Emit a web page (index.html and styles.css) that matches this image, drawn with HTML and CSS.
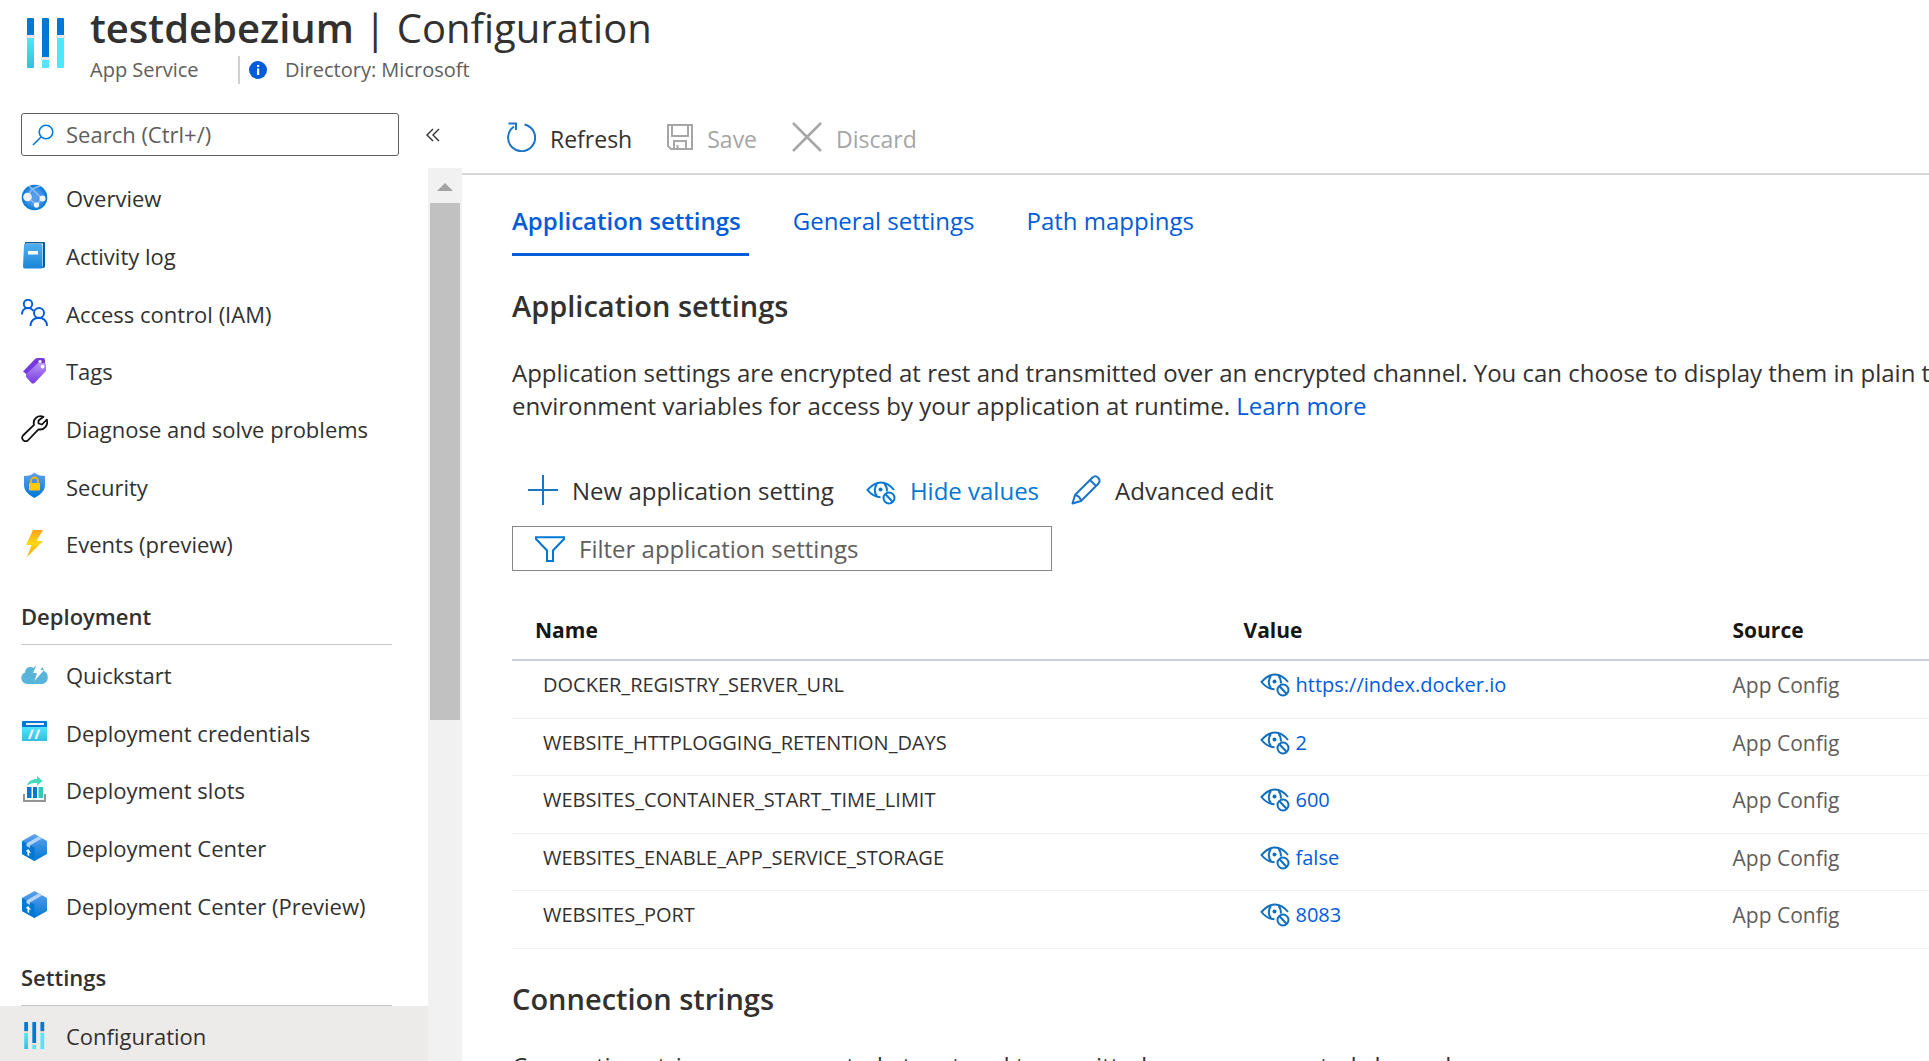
FILE: index.html
```html
<!DOCTYPE html>
<html lang="en">
<head>
<meta charset="utf-8">
<title>testdebezium | Configuration</title>
<link rel="stylesheet" href="styles.css">
</head>
<body>
<svg class="defs" width="0" height="0" aria-hidden="true">
  <defs>
    <linearGradient id="cyan" x1="0" y1="0" x2="0" y2="1"><stop offset="0" stop-color="#50e6ff"/><stop offset="1" stop-color="#32bedd"/></linearGradient>
    <linearGradient id="blue" x1="0" y1="0" x2="0" y2="1"><stop offset="0" stop-color="#5ea0ef"/><stop offset="1" stop-color="#0078d4"/></linearGradient>
    <linearGradient id="book" x1="0" y1="0" x2="0" y2="1"><stop offset="0" stop-color="#4fb0f0"/><stop offset="1" stop-color="#1a86d8"/></linearGradient>
    <linearGradient id="gold" x1="0" y1="0" x2="0" y2="1"><stop offset="0" stop-color="#fea11b"/><stop offset=".5" stop-color="#ffd70f"/><stop offset="1" stop-color="#fea11b"/></linearGradient>
    <linearGradient id="purple" x1="0" y1="0" x2="0" y2="1"><stop offset="0" stop-color="#b796f9"/><stop offset="1" stop-color="#773adc"/></linearGradient>
    <radialGradient id="globe" cx=".5" cy=".5" r=".5"><stop offset="0" stop-color="#5ea0ef"/><stop offset=".6" stop-color="#4494e8"/><stop offset="1" stop-color="#0078d4"/></radialGradient>
  </defs>
  <symbol id="sliders" viewBox="0 0 40 50">
    <path fill="#0078d4" d="M1 1q0-1 1-1h5q1 0 1 1v17H1zM16 1q0-1 1-1h5q1 0 1 1v38h-7zM31 1q0-1 1-1h5q1 0 1 1v17h-7z"/>
    <path fill="url(#cyan)" d="M1 20h7v29q0 1-1 1H2q-1 0-1-1z"/>
    <path fill="#50e6ff" d="M16 42h7v7q0 1-1 1h-5q-1 0-1-1zM31 20h7v29q0 1-1 1h-5q-1 0-1-1z"/>
    <path fill="#e6e6e6" d="M0 17h9v3H0zM15 39h9v3h-9zM30 17h9v3h-9z"/>
  </symbol>
  <symbol id="eye-off" viewBox="0 0 30 24">
    <g fill="none" stroke="currentColor" stroke-width="2">
      <path d="M28 9C24 4 19.500 1.500 15 1.500 9.500 1.500 5 5 1.500 9c3.500 4.500 8 7 13 7.300"/>
      <path d="M11 3C8 6.500 8 11.500 11 15M18.500 3c2 2 2.700 4.500 2.300 7.500"/>
      <circle cx="23" cy="17" r="5.500"/>
      <path d="M19.500 13.200l7 7.600"/>
    </g>
    <circle cx="14.500" cy="8.500" r="2" fill="currentColor"/>
  </symbol>
  <symbol id="package" viewBox="0 0 27 27">
    <path fill="url(#blue)" d="M1 7L13.500 0 26 7v13l-12.500 7L1 20z"/>
    <path fill="#0078d4" d="M1 7l12.500 6.500V27L1 20z"/>
    <path fill="#b5d5f8" d="M5.500 9.500L17.500 2.500l3.500 2L9 11.500V14l-3.500-2z"/>
    <path fill="#fff" d="M7.200 15l2.800 4-1.800-.5v3.500l-1.700-.8v-3.500L4.800 17z"/>
  </symbol>
</svg>

<header class="page-header">
  <svg class="resource-icon" viewBox="0 0 40 50" aria-hidden="true"><use href="#sliders"/></svg>
  <div>
    <h1 class="title"><strong>testdebezium</strong> | Configuration</h1>
    <div class="subtitle">
      <span class="kind">App Service</span>
      <svg class="info" viewBox="0 0 18 18" aria-hidden="true"><circle cx="9" cy="9" r="9" fill="#015cda"/><path fill="#fff" d="M8 7.500h2.200V14H8zM8 4h2.200v2H8z"/></svg>
      <span>Directory: Microsoft</span>
    </div>
  </div>
</header>

<div class="workspace">
  <aside class="sidebar">
    <div class="search-row">
      <label class="search">
        <svg viewBox="0 0 22 22" aria-hidden="true"><circle cx="14" cy="8" r="6.800"/><path d="M9 13l-8 8"/></svg>
        <input type="text" placeholder="Search (Ctrl+/)" aria-label="Search">
      </label>
      <button class="collapse" type="button" aria-label="Collapse menu">
        <svg viewBox="0 0 14 14" aria-hidden="true"><path d="M7 1L1 7l6 6M13 1L7 7l6 6"/></svg>
      </button>
    </div>
    <div class="menu-area">
      <nav class="menu">
        <a class="item" href="#overview">
          <svg viewBox="0 0 27 27" aria-hidden="true"><circle cx="13.500" cy="13.500" r="12.800" fill="url(#globe)"/><path d="M6.500 13L11 5l10 9.500-5.500 6.500zM11 5l8-3M11 5L8 2" fill="none" stroke="#8fbdf5" stroke-width="1.500"/><g fill="#f2f2f2"><circle cx="6.500" cy="13" r="4.300"/><circle cx="21.500" cy="14.500" r="3"/><circle cx="15.500" cy="21" r="2.700"/></g></svg>
          <span>Overview</span></a>
        <a class="item" href="#activity">
          <svg viewBox="0 0 27 27" aria-hidden="true"><path fill="#005ba1" d="M5 0h18q1 0 1 1v23q0 2-2 2H4V1q0-1 1-1z"/><path fill="#fff" d="M5 1.500h17v23H5z"/><path fill="url(#book)" d="M3 3q0-1 1-1h16q1.500 0 1.500 1.500V25q0 1.500-1.500 1.500H4q-2 0-2-2z"/><path fill="#fff" d="M7 9h10v3.500H7z"/></svg>
          <span>Activity log</span></a>
        <a class="item" href="#access">
          <svg viewBox="0 0 27 27" fill="none" stroke="#015cda" stroke-width="1.900" aria-hidden="true"><circle cx="7" cy="5" r="4.200"/><circle cx="18" cy="14" r="5"/><path d="M1 15.500C1 8 9 7 12.500 12M9.500 27c0-11 16.500-11 16.500 0"/></svg>
          <span>Access control (IAM)</span></a>
        <a class="item" href="#tags">
          <svg viewBox="0 0 27 27" aria-hidden="true"><path fill="#773adc" d="M2 14.500L14 2q1-1 3-1h5q2 0 2 2v4L9 20z"/><path fill="url(#purple)" d="M5 17.500L17 6h6q2 0 2 2v6L13.500 26q-1.500 1-3 0L5 20z"/><circle cx="19" cy="4.500" r="1.600" fill="#fff"/><circle cx="21.500" cy="9.500" r="1.900" fill="#fff"/></svg>
          <span>Tags</span></a>
        <a class="item" href="#diagnose">
          <svg viewBox="0 0 27 27" fill="none" stroke="#111" stroke-width="1.800" stroke-linejoin="round" aria-hidden="true"><path d="M22.500 1.800C17-.5 11.500 4 13 9.800L2 20.500a3.500 3.500 0 0 0 4.800 5L17.500 14.300C23.500 15.500 27.500 10 25.800 4.500L21 9.500 17.500 8.500V5.500z"/></svg>
          <span>Diagnose and solve problems</span></a>
        <a class="item" href="#security">
          <svg viewBox="0 0 27 27" aria-hidden="true"><path fill="url(#blue)" d="M3 4q7 0 10.500-3.500Q17 4 24 4v9c0 7-6.500 10.500-10.500 13C9.500 23.500 3 20 3 13z"/><path d="M10 12V9a3.500 3.500 0 0 1 7 0v3" fill="none" stroke="#f5b800" stroke-width="1.800"/><rect x="8" y="11" width="11" height="7.500" rx="1" fill="#ffca0a"/></svg>
          <span>Security</span></a>
        <a class="item" href="#events">
          <svg viewBox="0 0 27 27" aria-hidden="true"><path fill="url(#gold)" d="M12 0h10l-6.500 11H22L6 27l4.500-12H5z"/></svg>
          <span>Events (preview)</span></a>

        <h2 class="group">Deployment</h2>
        <a class="item" href="#quickstart">
          <svg viewBox="0 0 27 27" aria-hidden="true"><path fill="#59b4d9" d="M6 23a6 6 0 0 1-2-11.500C4 7 9 4.500 12.500 7 14 3.500 22 3 23 10c5 1.500 5.500 12-1.500 13z"/><path fill="#fff" d="M16 3h7l-3.500 6H23l-9.500 11 2.500-8h-4z"/></svg>
          <span>Quickstart</span></a>
        <a class="item" href="#credentials">
          <svg viewBox="0 0 27 27" aria-hidden="true"><path fill="url(#cyan)" d="M1 9h25v14H1z"/><path fill="#0078d4" d="M1 4q0-1 1-1h23q1 0 1 1v5H1z"/><path fill="#f2f2f2" d="M5 5h18v2H5zM10.500 11.500h2.500L9.500 21H7zM17 11.500h2.500L16 21h-2.500z"/></svg>
          <span>Deployment credentials</span></a>
        <a class="item" href="#slots">
          <svg viewBox="0 0 27 27" aria-hidden="true"><path fill="#949494" d="M2 18h2v6h19v-6h2v8H2z"/><path fill="#0078d4" d="M6 11h4.500v11H6zM12 11h4v11h-4z"/><path fill="#32c8b4" d="M17.500 11H22v11h-4.500z"/><path fill="#3cdcbe" d="M6 10c1-5 5-7 10-7V0l5.500 5L16 9.500V7c-4 0-7 0-10 3z"/></svg>
          <span>Deployment slots</span></a>
        <a class="item" href="#center">
          <svg viewBox="0 0 27 27" aria-hidden="true"><use href="#package"/></svg>
          <span>Deployment Center</span></a>
        <a class="item" href="#center-preview">
          <svg viewBox="0 0 27 27" aria-hidden="true"><use href="#package"/></svg>
          <span>Deployment Center (Preview)</span></a>

        <h2 class="group">Settings</h2>
        <a class="item selected" href="#configuration" aria-current="page">
          <svg viewBox="0 0 40 50" aria-hidden="true"><use href="#sliders"/></svg>
          <span>Configuration</span></a>
      </nav>
      <div class="scrollbar" aria-hidden="true">
        <svg viewBox="0 0 16 8"><path d="M8 0l8 8H0z" fill="#a3a3a3"/></svg>
        <div class="thumb"></div>
      </div>
    </div>
  </aside>

  <main class="main">
    <div class="toolbar">
      <button class="command" type="button">
        <svg viewBox="0 0 30 30" fill="none" stroke="#1a74c8" stroke-width="2" aria-hidden="true"><path d="M18.500 2.500A13.500 13.500 0 1 1 8 4.500M2.500 1.500H10V8"/></svg>
        <span>Refresh</span></button>
      <button class="command" type="button" disabled>
        <svg class="save" viewBox="0 0 26 26" fill="none" stroke="#a6a6a6" stroke-width="2" aria-hidden="true"><path d="M1 1h24v24H4l-3-3zM5 1v11h16V1M7 25v-8h12v8M10.500 25v-4"/></svg>
        <span>Save</span></button>
      <button class="command" type="button" disabled>
        <svg viewBox="0 0 30 30" fill="none" stroke="#a6a6a6" stroke-width="2.500" aria-hidden="true"><path d="M1 1l28 28M29 1L1 29"/></svg>
        <span>Discard</span></button>
    </div>

    <div class="content">
      <nav class="tabs">
        <a class="tab active" href="#app-settings" aria-current="true">Application settings</a>
        <a class="tab" href="#general">General settings</a>
        <a class="tab" href="#paths">Path mappings</a>
      </nav>

      <section>
        <h2 class="heading">Application settings</h2>
        <p class="text">Application settings are encrypted at rest and transmitted over an encrypted channel. You can choose to display them in plain text<br>environment variables for access by your application at runtime. <a href="#learn">Learn more</a></p>

        <div class="actions">
          <button class="command" type="button">
            <svg viewBox="0 0 30 30" fill="none" stroke="#1a74c8" stroke-width="2" aria-hidden="true"><path d="M15 0v30M0 15h30"/></svg>
            <span>New application setting</span></button>
          <button class="command toggle" type="button">
            <svg viewBox="0 -6 30 30" aria-hidden="true"><use href="#eye-off" width="30" height="24"/></svg>
            <span>Hide values</span></button>
          <button class="command" type="button">
            <svg viewBox="0 0 30 30" fill="none" stroke="#1a74c8" stroke-width="2" stroke-linejoin="round" aria-hidden="true"><path d="M1.500 28.500L4 20 21.500 2.500c4-3.500 9 2 6 6L10 26zM19 5l6 6M4 20q5 1 6 6"/></svg>
            <span>Advanced edit</span></button>
        </div>

        <label class="filter">
          <svg viewBox="0 0 30 26" aria-hidden="true"><path d="M1 1.200h28v1.800L18 14.500V25h-6V14.500L1 3z"/></svg>
          <input type="text" placeholder="Filter application settings" aria-label="Filter application settings">
        </label>

        <table class="settings">
          <thead>
            <tr><th class="name">Name</th><th class="value">Value</th><th>Source</th></tr>
          </thead>
          <tbody>
            <tr><td class="name">DOCKER_REGISTRY_SERVER_URL</td><td class="value"><a href="#v1"><svg viewBox="0 0 30 24" aria-hidden="true"><use href="#eye-off"/></svg>https://index.docker.io</a></td><td class="source">App Config</td></tr>
            <tr><td class="name">WEBSITE_HTTPLOGGING_RETENTION_DAYS</td><td class="value"><a href="#v2"><svg viewBox="0 0 30 24" aria-hidden="true"><use href="#eye-off"/></svg>2</a></td><td class="source">App Config</td></tr>
            <tr><td class="name">WEBSITES_CONTAINER_START_TIME_LIMIT</td><td class="value"><a href="#v3"><svg viewBox="0 0 30 24" aria-hidden="true"><use href="#eye-off"/></svg>600</a></td><td class="source">App Config</td></tr>
            <tr><td class="name">WEBSITES_ENABLE_APP_SERVICE_STORAGE</td><td class="value"><a href="#v4"><svg viewBox="0 0 30 24" aria-hidden="true"><use href="#eye-off"/></svg>false</a></td><td class="source">App Config</td></tr>
            <tr><td class="name">WEBSITES_PORT</td><td class="value"><a href="#v5"><svg viewBox="0 0 30 24" aria-hidden="true"><use href="#eye-off"/></svg>8083</a></td><td class="source">App Config</td></tr>
          </tbody>
        </table>
      </section>

      <section>
        <h2 class="heading">Connection strings</h2>
        <p class="text">Connection strings are encrypted at rest and transmitted over an encrypted channel.</p>
      </section>
    </div>
  </main>
</div>
</body>
</html>
```
FILE: styles.css
```css
* { box-sizing: border-box; }

body {
  margin: 0;
  height: 100vh;
  display: flex;
  flex-direction: column;
  overflow: hidden;
  background: #fff;
  color: #323130;
  font-family: "Open Sans", "Noto Sans", sans-serif;
  font-size: 22px;
}

h1, h2, p { margin: 0; }
a { color: #015cda; text-decoration: none; }
button, input { font: inherit; color: inherit; border: 0; padding: 0; background: none; }
svg { display: block; flex: none; }
.defs { position: absolute; }

/* Header */
.page-header {
  display: flex;
  align-items: flex-start;
  gap: 24px;
  padding: 4px 26px 16px;
}
.resource-icon { width: 40px; height: 50px; margin-top: 14px; }
.title { font-size: 40px; line-height: 48px; font-weight: 400; white-space: nowrap; }
.title strong { font-weight: 600; }
.subtitle {
  display: flex;
  align-items: center;
  margin-top: 4px;
  font-size: 20px;
  line-height: 28px;
  color: #605e5c;
}
.kind { width: 150px; border-right: 2px solid #d2d0ce; }
.info { width: 18px; height: 18px; margin: 0 18px 0 9px; }

.workspace { flex: 1; display: flex; min-height: 0; }

/* Sidebar */
.sidebar { flex: none; width: 462px; display: flex; flex-direction: column; }
.search-row { display: flex; align-items: center; gap: 27px; padding: 13px 21px 12px; }
.search {
  flex: none;
  width: 378px;
  height: 43px;
  display: flex;
  align-items: center;
  gap: 12px;
  padding: 0 10px;
  border: 1px solid #605e5c;
  border-radius: 3px;
}
.search svg { width: 22px; height: 22px; fill: none; stroke: #0078d4; stroke-width: 1.6; }
.search input { flex: 1; min-width: 0; outline: 0; padding-bottom: 2px; }
input::placeholder { color: #605e5c; opacity: 1; }
.collapse svg { width: 14px; height: 14px; fill: none; stroke: #323130; stroke-width: 1.4; }

.menu-area { flex: 1; display: flex; min-height: 0; }
.menu { flex: 1; min-width: 0; overflow: hidden; }
.item {
  display: flex;
  align-items: center;
  gap: 18px;
  height: 58px;
  padding-left: 21px;
  color: #323130;
}
.item:nth-of-type(3n) { height: 57px; }
.item svg { width: 27px; height: 27px; }
.item span { padding-top: 2px; }
.item.selected { height: 58px; background: #edebe9; }
.group {
  margin: 0 36px 0 21px;
  padding: 29px 0 13px;
  border-bottom: 1px solid #c8c6c4;
  font-size: 22px;
  line-height: 30px;
  font-weight: 600;
}

.scrollbar {
  flex: none;
  width: 34px;
  padding: 15px 2px 0;
  background: #f1f1f1;
}
.scrollbar svg { width: 16px; height: 8px; margin: 0 auto 12px; }
.thumb { height: 517px; background: #c1c1c1; }

/* Main pane */
.main { flex: 1; min-width: 0; overflow: hidden; }
.toolbar {
  display: flex;
  align-items: center;
  gap: 35px;
  height: 75px;
  padding-left: 44px;
  border-bottom: 2px solid #d6d6d6;
  font-size: 23px;
}
.command { display: flex; align-items: center; gap: 14px; line-height: 32px; white-space: nowrap; }
.command svg { width: 30px; height: 30px; }
.command .save { width: 26px; height: 26px; }
.command span { padding-top: 2px; }
.toolbar .command span { padding-top: 4px; }
.command:disabled { color: #a6a6a6; }
.toggle { color: #0078d4; }

.content { padding-left: 50px; font-size: 24px; }
.tabs { display: flex; gap: 44px; padding-top: 30px; }
.tab {
  padding: 0 8px 16px 0;
  border-bottom: 3px solid transparent;
  line-height: 32px;
  white-space: nowrap;
}
.active { border-color: #015cda; font-weight: 600; }

.heading { margin: 32px 0; font-size: 29px; line-height: 36px; font-weight: 600; }
.text { line-height: 33px; white-space: nowrap; }

.actions { display: flex; gap: 32px; margin: 51px 0 19px; padding-left: 16px; }
.filter {
  display: flex;
  align-items: center;
  gap: 14px;
  width: 540px;
  height: 45px;
  padding: 0 22px;
  border: 1px solid #8a8886;
}
.filter svg { width: 30px; height: 26px; fill: none; stroke: #0078d4; stroke-width: 2; }
.filter input { flex: 1; min-width: 0; outline: 0; }

.settings { width: 100%; table-layout: fixed; border-collapse: separate; border-spacing: 0; font-size: 20px; line-height: 28px; }
.settings th {
  padding: 45px 0 15px 23px;
  border-bottom: 2px solid #c8d1dc;
  color: #161616;
  font-size: 21px;
  font-weight: 700;
  text-align: left;
}
.settings th.name { width: 50%; }
.settings th.value { width: 489px; }
.settings td {
  height: 58px;
  padding: 10px 0 0 23px;
  border-bottom: 1px solid #f0f0f0;
  vertical-align: top;
}
.settings tr:nth-child(even) td { height: 57px; }
.settings td.name { padding-left: 31px; }
.settings td.value { padding-left: 39px; }
.settings td a { display: flex; align-items: center; gap: 6px; }
.settings td svg { width: 30px; height: 24px; color: #106ebe; }
.settings .source { color: #605e5c; font-size: 21px; }
```
